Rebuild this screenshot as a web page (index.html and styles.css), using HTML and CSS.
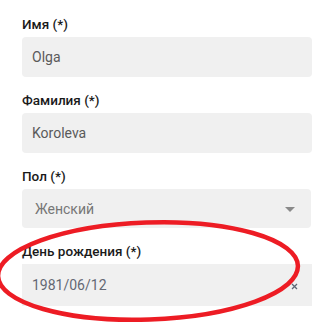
FILE: index.html
```html
<!DOCTYPE html>
<html lang="ru">
<head>
<meta charset="utf-8">
<link rel="stylesheet" href="styles.css">
</head>
<body>
<form class="form">
  <div class="field">
    <label class="field-label">Имя (*)</label>
    <div class="control control--text">Olga</div>
  </div>
  <div class="field">
    <label class="field-label">Фамилия (*)</label>
    <div class="control control--text">Koroleva</div>
  </div>
  <div class="field">
    <label class="field-label">Пол (*)</label>
    <div class="control control--select">
      <span class="select-value">Женский</span>
      <span class="select-arrow"></span>
    </div>
  </div>
  <div class="field">
    <label class="field-label">День рождения (*)</label>
    <div class="control control--date">
      <span class="date-value">1981/06/12</span>
      <svg class="date-clear" width="7" height="7" viewBox="0 0 7 7"><path d="M1 1L6 6M6 1L1 6" stroke="#5d6675" stroke-width="1.3" fill="none"/></svg>
    </div>
  </div>
</form>
<svg class="annotation" width="325" height="324" viewBox="0 0 325 324">
  <ellipse cx="148" cy="271" rx="150" ry="48.5" transform="rotate(-2 148 271)" fill="none" stroke="#ed1c24" stroke-width="4.5"/>
</svg>
</body>
</html>
```
FILE: styles.css
```css
html, body {
  margin: 0;
  padding: 0;
  background: #ffffff;
}
body {
  font-family: Roboto, "Noto Sans", sans-serif;
  position: relative;
  width: 325px;
  height: 324px;
  overflow: hidden;
}
.form {
  display: flex;
  flex-direction: column;
  gap: 15px;
  padding: 16px 0 0 22px;
  width: 290px;
}
.field {
  display: flex;
  flex-direction: column;
  gap: 5px;
}
.field-label {
  font-size: 13.5px;
  line-height: 16px;
  font-weight: 500;
  color: #1a1a1a;
}
.control {
  display: flex;
  align-items: center;
  background: #f0f0f0;
  font-size: 14px;
  line-height: 16px;
  color: #5a5a5a;
  box-sizing: border-box;
}
.control--text {
  height: 40px;
  border-radius: 4px;
  padding-left: 10px;
}
.control--select {
  height: 39px;
  border-radius: 4px;
  padding: 0 16px 0 13px;
  justify-content: space-between;
  color: #777777;
  width: 289px;
}
.select-arrow {
  width: 0;
  height: 0;
  border-left: 5px solid transparent;
  border-right: 5px solid transparent;
  border-top: 5px solid #8a8a8a;
  margin-top: 2px;
}
.control--date {
  height: 42px;
  padding: 0 14px 0 10px;
  justify-content: space-between;
  color: #646873;
}
.date-clear {
  margin-top: 3px;
}
.annotation {
  position: absolute;
  left: 0;
  top: 0;
  pointer-events: none;
}
```
